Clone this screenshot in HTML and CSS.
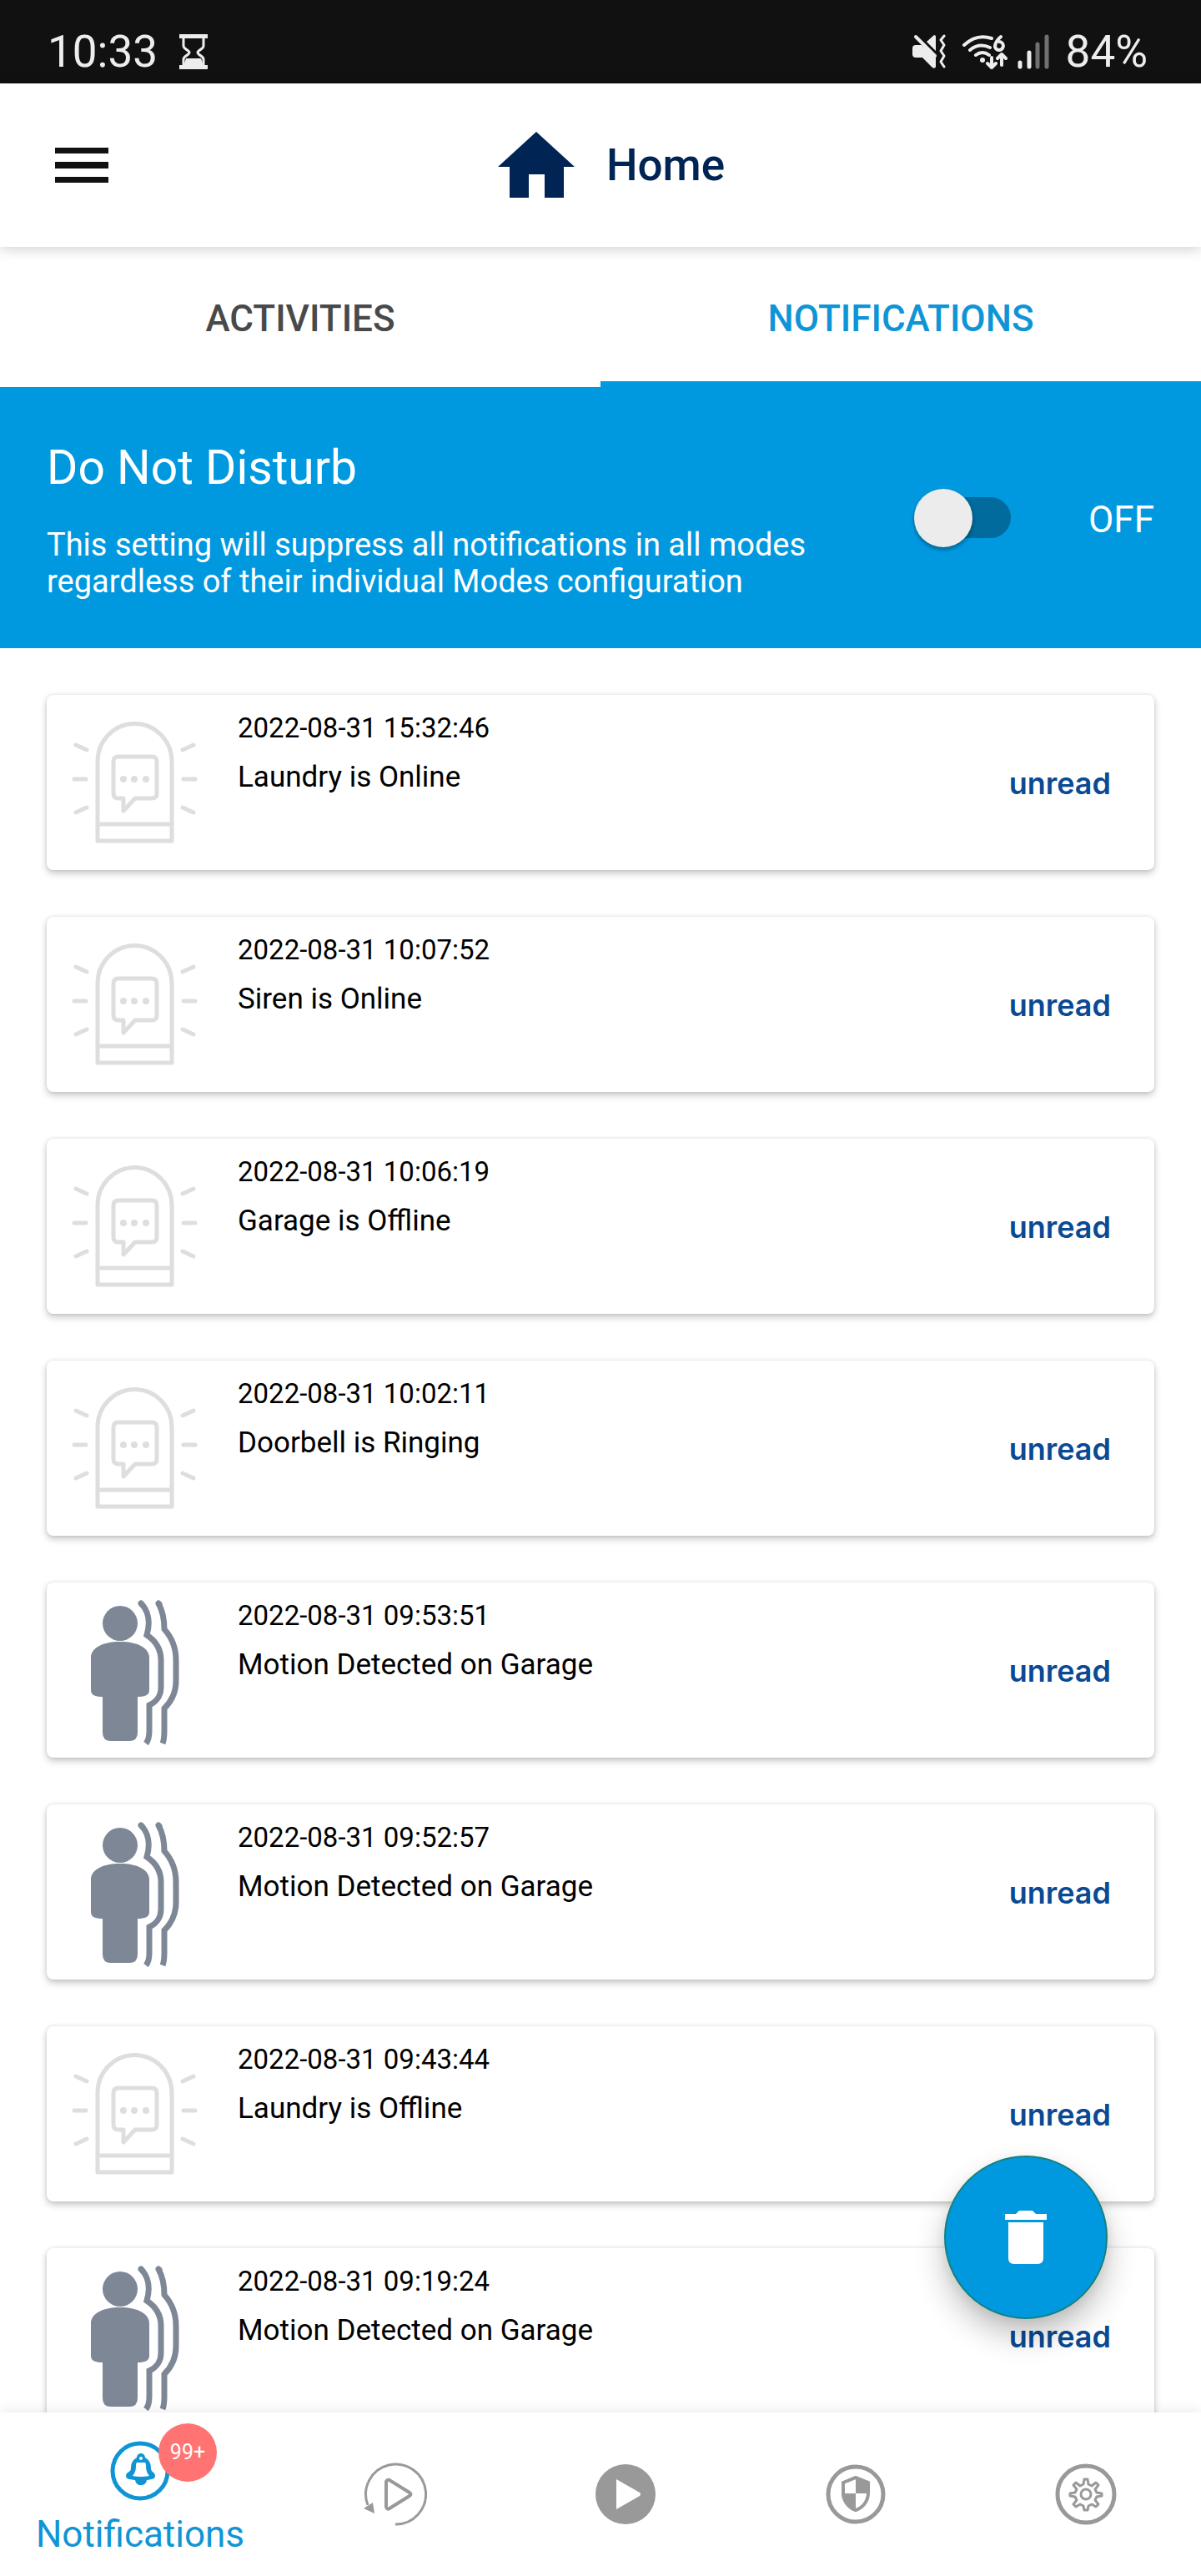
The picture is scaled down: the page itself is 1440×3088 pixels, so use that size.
FILE: index.html
```html
<!DOCTYPE html>
<html lang="en">
<head>
<meta charset="utf-8">
<meta name="viewport" content="width=device-width, initial-scale=1">
<title>Home – Notifications</title>
<link rel="stylesheet" href="styles.css">
</head>
<body>
<svg class="sprite" aria-hidden="true">
  <symbol id="siren" viewBox="0 0 210 210">
    <g fill="none" stroke="#dedede" stroke-width="5" stroke-linecap="round" stroke-linejoin="round">
      <path d="M61 175V80a44 45 0 0 1 89 0v95z"/>
      <path d="M61 155h89M33 101h14M164 101h14M35 60l13 6M176 60l-13 6M35 141l13-6M176 141l-13-6"/>
      <path d="M86 74h40q6 0 6 6v38q0 6-6 6h-20l-14 15v-15h-6q-6 0-6-6v-38q0-6 6-6z"/>
    </g>
    <g fill="#dedede"><circle cx="92" cy="101" r="4"/><circle cx="105" cy="101" r="4"/><circle cx="119" cy="101" r="4"/></g>
  </symbol>
  <symbol id="motion" viewBox="0 0 210 210">
    <g fill="#7e8796">
      <circle cx="88" cy="49" r="21"/>
      <path d="M88 71c22 0 35 8 35 19v39c0 6-5 8-14 8v43q0 10-10 10H77q-10 0-10-10v-43c-9 0-14-2-14-8V90c0-11 13-19 35-19z"/>
    </g>
    <g fill="none" stroke="#7e8796" stroke-width="7" stroke-linejoin="miter">
      <path d="M113 25c8 8 12 21 7 38 12 8 17 18 17 30v33c0 9-5 17-14 21v31q0 10-4 15"/>
      <path d="M134 25c5 9 7 20 7 31 9 10 14 22 14 37v25c0 14-5 24-14 33v27q0 10-2 15"/>
      <path stroke-linecap="round" d="M113 25l1 1M134 25l1 1"/>
    </g>
  </symbol>
</svg>

<div class="status">
  <div class="status-group">
    <span>10:33</span>
    <svg class="hourglass" width="34" height="42" viewBox="0 0 34 42" aria-hidden="true">
      <path d="M0 0h34v5H0zM0 37h34v5H0z" fill="#ededed"/>
      <path d="M5 4v10c0 4 7 5 7 8s-7 4-7 8v9h24v-9c0-4-7-5-7-8s7-4 7-8V4" fill="none" stroke="#ededed" stroke-width="3"/>
      <path d="M8 29h18l3 9H5z" fill="#ededed"/>
    </svg>
  </div>
  <div class="status-group status-right">
    <svg width="164" height="42" viewBox="0 0 164 42" aria-hidden="true">
      <g fill="#ededed">
        <path d="M28 3v17L17 9l9-8q2 0 2 2zM4 13h7l17 14v12q-1 3-4 1L12 28H4q-4 0-4-4v-7q0-4 4-4z"/>
        <circle cx="84" cy="31" r="3"/>
      </g>
      <g fill="none" stroke="#ededed" stroke-width="4" stroke-linecap="round" stroke-linejoin="round">
        <path d="M4 3l23 23"/>
        <path d="M38 2l-4 5 4 6-4 7 4 6-4 7 4 6" stroke-width="3"/>
        <path d="M62 13q15-14 33-8M69 19q11-9 24-3M76 25q8-6 16 0"/>
        <path d="M106 3q-7 6-7 12a5 5 0 1 0 5-6M95 28v12M90 35l5 5 5-5M107 37V24M102 29l5-5 5 5"/>
      </g>
      <g stroke-width="5" stroke-linecap="round">
        <path d="M129 34v5M140 22v17" stroke="#ededed"/>
        <path d="M150 12v27M161 3v36" stroke="#707070"/>
      </g>
    </svg>
    <span>84%</span>
  </div>
</div>

<header class="header">
  <button class="menu" aria-label="Menu">
    <svg width="64" height="42" viewBox="0 0 64 42"><path d="M0 0h64v7H0zM0 17h64v8H0zM0 35h64v7H0z" fill="#111"/></svg>
  </button>
  <h1 class="title">
    <svg width="92" height="80" viewBox="0 0 92 80" aria-hidden="true"><path d="M46 0l46 42H79v37H56V51H37v28H14V42H0z" fill="#002454"/></svg>
    Home
  </h1>
</header>

<nav class="tabs">
  <a class="tab" href="#activities">ACTIVITIES</a>
  <a class="tab tab-active" href="#notifications">NOTIFICATIONS</a>
</nav>

<section class="dnd">
  <div class="dnd-text">
    <h2>Do Not Disturb</h2>
    <p>This setting will suppress all notifications in all modes regardless of their individual Modes configuration</p>
  </div>
  <input class="switch" type="checkbox" role="switch" id="dnd" aria-label="Do Not Disturb">
  <label class="dnd-state" for="dnd">OFF</label>
</section>

<main class="list">
  <article class="card"><svg class="card-icon"><use href="#siren"/></svg><div class="card-body"><time>2022-08-31 15:32:46</time><p>Laundry is Online</p></div><span class="unread">unread</span></article>
  <article class="card"><svg class="card-icon"><use href="#siren"/></svg><div class="card-body"><time>2022-08-31 10:07:52</time><p>Siren is Online</p></div><span class="unread">unread</span></article>
  <article class="card"><svg class="card-icon"><use href="#siren"/></svg><div class="card-body"><time>2022-08-31 10:06:19</time><p>Garage is Offline</p></div><span class="unread">unread</span></article>
  <article class="card"><svg class="card-icon"><use href="#siren"/></svg><div class="card-body"><time>2022-08-31 10:02:11</time><p>Doorbell is Ringing</p></div><span class="unread">unread</span></article>
  <article class="card"><svg class="card-icon"><use href="#motion"/></svg><div class="card-body"><time>2022-08-31 09:53:51</time><p>Motion Detected on Garage</p></div><span class="unread">unread</span></article>
  <article class="card"><svg class="card-icon"><use href="#motion"/></svg><div class="card-body"><time>2022-08-31 09:52:57</time><p>Motion Detected on Garage</p></div><span class="unread">unread</span></article>
  <article class="card"><svg class="card-icon"><use href="#siren"/></svg><div class="card-body"><time>2022-08-31 09:43:44</time><p>Laundry is Offline</p></div><span class="unread">unread</span></article>
  <article class="card"><svg class="card-icon"><use href="#motion"/></svg><div class="card-body"><time>2022-08-31 09:19:24</time><p>Motion Detected on Garage</p></div><span class="unread">unread</span></article>
</main>

<button class="fab" aria-label="Delete notifications">
  <svg width="50" height="64" viewBox="0 0 50 64"><path d="M0 4h13l4-4h16l4 4h13v7H0zM4 14h42v43q0 7-7 7H11q-7 0-7-7z" fill="#fff"/></svg>
</button>

<nav class="bottom">
  <a class="item item-active" href="#notifications">
    <span class="bell">
      <svg width="72" height="72" viewBox="0 0 72 72" aria-hidden="true">
        <circle cx="36" cy="36" r="33" fill="none" stroke="#0f95d6" stroke-width="5"/>
        <path d="M32 20a5 5 0 0 1 10 0c5 3 7 7 7 13 0 5 5 4 5 9 0 4-4 4-10 5-1 4-3 6-7 6s-6-2-7-6c-7-1-11-1-11-5 0-5 6-4 6-9 0-6 2-10 7-13z" fill="#0f95d6"/>
        <path d="M37 23c4 0 6 3 6 7 0 5 1 8 4 12q-10 2-20 0c3-4 4-7 4-12 0-4 2-7 6-7z" fill="#fff"/>
        <path d="M31 23h12v3H31z" fill="#0f95d6"/>
        <circle cx="37" cy="21" r="2" fill="#fff"/>
      </svg>
      <span class="badge">99+</span>
    </span>
    <span>Notifications</span>
  </a>
  <a class="item" href="#playback" aria-label="Playback">
    <svg width="76" height="76" viewBox="0 0 76 76">
      <path d="M38 74A36 36 0 1 0 5 51" fill="none" stroke="#999" stroke-width="3"/>
      <path d="M0 55l11-7 2 13z" fill="#999"/>
      <path d="M27 23q1-3 4-2l24 15q3 2 0 4L31 55q-3 2-4-2z" fill="none" stroke="#999" stroke-width="4"/>
    </svg>
  </a>
  <a class="item" href="#live" aria-label="Live">
    <svg width="76" height="76" viewBox="0 0 76 76"><circle cx="38" cy="38" r="36" fill="#999"/><path d="M27 20l28 16q2 2 0 4L27 56z" fill="#fff"/></svg>
  </a>
  <a class="item" href="#modes" aria-label="Modes">
    <svg width="76" height="76" viewBox="0 0 76 76">
      <circle cx="38" cy="38" r="33" fill="none" stroke="#999" stroke-width="5"/>
      <path d="M38 18l15 6v12c0 10-6 18-15 21-9-3-15-11-15-21V24z" fill="none" stroke="#999" stroke-width="4"/>
      <path d="M38 16l17 7v14H38zM38 37v22C28 55 22 47 21 37z" fill="#999"/>
    </svg>
  </a>
  <a class="item" href="#settings" aria-label="Settings">
    <svg width="76" height="76" viewBox="0 0 76 76" fill="none" stroke="#999">
      <circle cx="38" cy="38" r="34" stroke-width="5"/>
      <circle cx="38" cy="38" r="6" stroke-width="3"/>
      <path stroke-width="3" stroke-linejoin="round" d="M36 20h4l1 6 4 2 5-4 3 3-4 5 2 4 6 1v3l-6 1-2 4 4 5-3 3-5-3-4 2-1 5h-4l-1-5-4-2-5 3-3-3 4-5-2-4-6-1v-3l6-1 2-4-4-5 3-3 5 4 4-2z"/>
    </svg>
  </a>
</nav>
</body>
</html>
```
FILE: styles.css
```css
* { box-sizing: border-box; }
html, body { height: 100%; }
body {
  margin: 0;
  display: flex;
  flex-direction: column;
  background: #fff;
  color: #000;
  font-family: Roboto, "Liberation Sans", sans-serif;
}
h1, h2, p { margin: 0; font-weight: 400; }
a { color: inherit; text-decoration: none; }
button { padding: 0; border: 0; background: none; cursor: pointer; }
svg { display: block; flex: none; }
.sprite { position: absolute; width: 0; height: 0; }

.status {
  flex: none;
  display: flex;
  justify-content: space-between;
  padding: 30px 64px 6px 57px;
  background: #111;
  color: #ededed;
  font-size: 53px;
  line-height: 64px;
}
.status-group { display: flex; align-items: center; gap: 26px; }
.status-right { gap: 20px; }

.header {
  flex: none;
  position: relative;
  z-index: 1;
  display: grid;
  grid-template-columns: 1fr auto 1fr;
  align-items: center;
  height: 196px;
  padding: 0 66px;
  background: #fff;
  box-shadow: 0 2px 16px rgba(0, 0, 0, .2);
}
.menu { justify-self: start; }
.title {
  display: flex;
  align-items: center;
  gap: 38px;
  padding-left: 26px;
  color: #002454;
  font-size: 53px;
  font-weight: 500;
  line-height: 64px;
}

.tabs { flex: none; display: grid; grid-template-columns: 1fr 1fr; height: 168px; }
.tab {
  display: flex;
  align-items: center;
  justify-content: center;
  border-bottom: 7px solid transparent;
  padding-top: 10px;
  color: #494949;
  font-size: 44px;
  font-weight: 500;
  line-height: 52px;
}
.tab-active { border-color: #0099df; color: #0f95d6; }

.dnd {
  flex: none;
  display: flex;
  align-items: center;
  padding: 58px 56px;
  background: #0099df;
  color: #fff;
}
.dnd-text { flex: 1; padding: 6px 120px 0 0; }
.dnd h2 { margin-bottom: 38px; font-size: 57px; line-height: 65px; }
.dnd p { font-size: 38px; line-height: 44px; }
.switch {
  flex: none;
  appearance: none;
  position: relative;
  width: 107px;
  height: 49px;
  margin: 0;
  border-radius: 25px;
  background: #006b9c;
}
.switch::before {
  content: "";
  position: absolute;
  left: -9px;
  top: -10px;
  width: 70px;
  height: 70px;
  border-radius: 50%;
  background: #ececec;
  box-shadow: 0 3px 5px rgba(0, 0, 0, .35);
}
.switch:checked::before { left: 46px; }
.dnd-state {
  width: 172px;
  padding-top: 4px;
  font-size: 44px;
  line-height: 52px;
  text-align: right;
}

.list {
  flex: 1;
  min-height: 0;
  overflow: hidden;
  display: flex;
  flex-direction: column;
  gap: 56px;
  padding: 56px 56px 0;
}
.card {
  flex: none;
  display: flex;
  align-items: center;
  height: 210px;
  padding-right: 52px;
  border-radius: 8px;
  background: #fff;
  box-shadow: 0 4px 8px rgba(0, 0, 0, .22), 0 0 4px rgba(0, 0, 0, .1);
}
.card-icon { width: 210px; height: 210px; }
.card-body {
  flex: 1;
  align-self: flex-start;
  padding: 10px 0 0 19px;
  font-size: 35px;
  line-height: 59px;
}
.card-body time { display: block; font-size: 33px; }
.unread {
  padding-top: 2px;
  color: #0a4a94;
  font-family: Inter, Roboto, sans-serif;
  font-size: 36px;
  font-weight: 600;
  line-height: 44px;
}

.fab {
  position: fixed;
  right: 112px;
  bottom: 308px;
  display: flex;
  align-items: center;
  justify-content: center;
  width: 196px;
  height: 196px;
  border: 2px solid #15807e;
  border-radius: 50%;
  background: #0099df;
  box-shadow: 0 20px 36px rgba(0, 0, 0, .24), 0 4px 16px rgba(0, 0, 0, .08);
}

.bottom {
  flex: none;
  position: relative;
  display: flex;
  height: 196px;
  background: #fff;
  box-shadow: 0 0 16px rgba(0, 0, 0, .1);
}
.item { flex: 276; display: flex; align-items: center; justify-content: center; }
.item-active {
  flex: 336;
  flex-direction: column;
  gap: 14px;
  padding-top: 10px;
  color: #0f95d6;
  font-size: 44px;
  line-height: 52px;
}
.bell { position: relative; }
.badge {
  position: absolute;
  left: 58px;
  top: -21px;
  width: 70px;
  height: 70px;
  border-radius: 50%;
  background: #ff7473;
  color: #fff;
  font-size: 25px;
  line-height: 70px;
  text-align: center;
}
```
